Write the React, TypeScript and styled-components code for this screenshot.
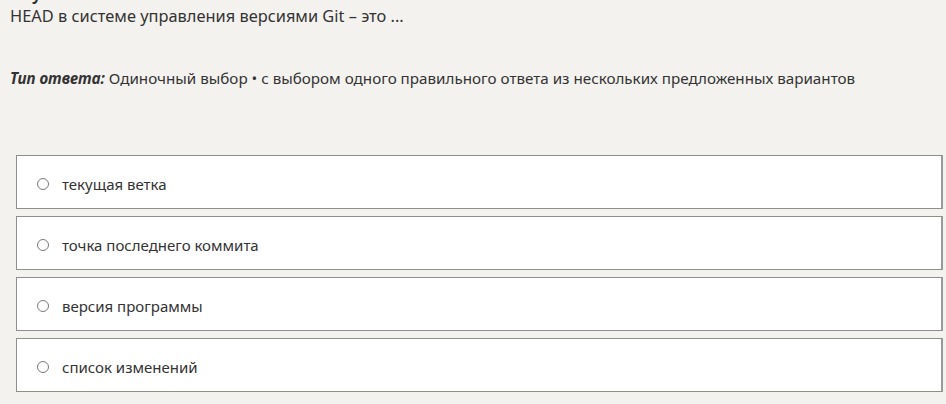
import { createGlobalStyle } from 'styled-components'
import styled from 'styled-components'

const GlobalStyle = createGlobalStyle`
  html, body {
    margin: 0;
    padding: 0;
    background: #f3f2ef;
  }
  body {
    font-family: 'Noto Sans', 'Open Sans', sans-serif;
    color: #333;
    overflow: hidden;
  }
`

const Page = styled.div`
  width: 946px;
  height: 404px;
  overflow: hidden;
  padding: 0 3px 0 10px;
  box-sizing: border-box;
`

const Heading = styled.div`
  font-size: 16px;
  font-weight: 700;
  line-height: 20px;
  margin-top: -16px;
  padding-left: 22px;
  color: #333;
`

const Question = styled.div`
  font-size: 16.4px;
  line-height: 20px;
  margin-top: 2px;
  color: #333;
`

const AnswerType = styled.div`
  font-size: 15.2px;
  line-height: 20px;
  margin-top: 42px;
  color: #333;

  b {
    font-weight: 700;
    font-style: italic;
  }
`

const Options = styled.div`
  display: flex;
  flex-direction: column;
  gap: 7px;
  margin: 67px 0 0 6px;
`

const Option = styled.label`
  display: flex;
  align-items: center;
  gap: 13px;
  height: 54px;
  box-sizing: border-box;
  padding: 4px 0 0 20px;
  background: #fff;
  border: 1px solid #8f8f8f;
  border-right: 2px solid #9a9a9a;
  font-size: 15px;
  color: #333;
  cursor: pointer;
`

const Radio = styled.span`
  width: 10px;
  height: 10px;
  border-radius: 50%;
  border: 1.5px solid #7a7a7a;
  flex: none;
`

const options = [
  'текущая ветка',
  'точка последнего коммита',
  'версия программы',
  'список изменений',
]

export default function App() {
  return (
    <Page>
      <GlobalStyle />
      <Heading>у</Heading>
      <Question>HEAD в системе управления версиями Git – это ...</Question>
      <AnswerType>
        <b>Тип ответа:</b> Одиночный выбор • с выбором одного правильного ответа из нескольких предложенных вариантов
      </AnswerType>
      <Options>
        {options.map((o) => (
          <Option key={o}>
            <Radio />
            {o}
          </Option>
        ))}
      </Options>
    </Page>
  )
}
